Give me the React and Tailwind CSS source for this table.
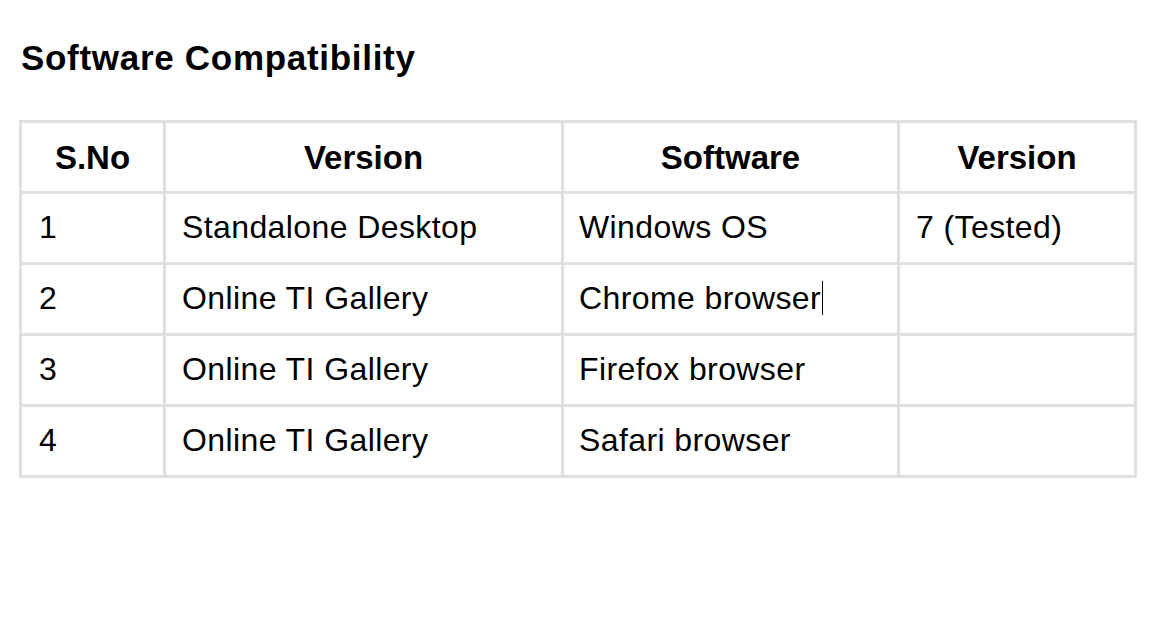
const rows = [
  { no: "1", version: "Standalone Desktop", software: "Windows OS", sw: "7 (Tested)" },
  { no: "2", version: "Online TI Gallery", software: "Chrome browser", sw: "", cursor: true },
  { no: "3", version: "Online TI Gallery", software: "Firefox browser", sw: "" },
  { no: "4", version: "Online TI Gallery", software: "Safari browser", sw: "" },
];

const headers = ["S.No", "Version", "Software", "Version"];

const cell = "bg-white flex items-center pb-[3px] text-[32px] leading-[32px] tracking-[0.4px]";

export default function App() {
  return (
    <div
      className="w-[1151px] h-[632px] bg-white text-black"
      style={{ fontFamily: '"Liberation Sans", Arial, sans-serif' }}
    >
      <h1 className="pt-[40px] pl-[21px] text-[35px] leading-[35px] font-bold tracking-[0.7px]">
        Software Compatibility
      </h1>

      {/* table drawn as a grid: gaps show the grey rule lines */}
      <div className="mt-[45px] ml-[19px] w-[1118px] grid grid-cols-[141px_395px_333px_234px] auto-rows-[68px] gap-[3px] p-[3px] bg-[#e0e0e0]">
        {headers.map((h, i) => (
          <div
            key={i}
            className="bg-white flex items-center justify-center text-[33px] leading-[33px] font-bold"
          >
            {h}
          </div>
        ))}
        {rows.map((r) => [
          <div key={r.no + "a"} className={cell + " pl-[17px]"}>
            {r.no}
          </div>,
          <div key={r.no + "b"} className={cell + " pl-[16px]"}>
            {r.version}
          </div>,
          <div key={r.no + "c"} className={cell + " pl-[15px]"}>
            {r.software}
            {r.cursor && <span className="inline-block w-[1px] h-[34px] bg-black ml-[1px]" />}
          </div>,
          <div key={r.no + "d"} className={cell + " pl-[16px]"}>
            {r.sw}
          </div>,
        ])}
      </div>
    </div>
  );
}
